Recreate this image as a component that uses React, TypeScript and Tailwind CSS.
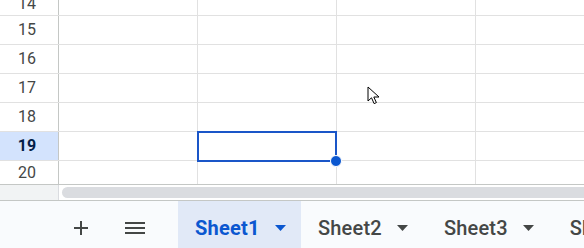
import React from 'react';

const ROWS = [14, 15, 16, 17, 18, 19, 20];
const SELECTED_ROW = 19;

const Caret = ({ className }: { className: string }) => (
  <svg width="11" height="6" viewBox="0 0 11 6" className={className}>
    <path d="M0 0h11L5.5 6z" fill="currentColor" />
  </svg>
);

const Row = ({ n }: { n: number }) => {
  const selected = n === SELECTED_ROW;
  const h = n === 14 ? 'h-[16px]' : n === 20 ? 'h-[23px]' : 'h-[29px]';
  return (
    <div className={`flex ${h} border-b border-[#e1e1e1] ${n === 20 ? 'border-b-0' : ''}`}>
      <div
        className={`w-[59px] shrink-0 border-r border-[#c4c7c5] flex justify-center pr-[4px] ${
          selected ? 'bg-[#d3e3fd] font-bold text-[#041e49]' : 'text-[#444746]'
        } ${n === 14 ? 'items-end pb-[3px]' : 'items-center'}`}
      >
        <span className="text-[16px] leading-none">{n}</span>
      </div>
      <div className="w-[139px] shrink-0 border-r border-[#e1e1e1]" />
      <div className="w-[139px] shrink-0 border-r border-[#e1e1e1]" />
      <div className="w-[139px] shrink-0 border-r border-[#e1e1e1]" />
      <div className="flex-1" />
    </div>
  );
};

const SheetTab = ({ name, active }: { name: string; active?: boolean }) => (
  <div
    className={`h-full flex items-center pt-[6px] shrink-0 ${
      active ? 'bg-[#e1e9f7] pl-[17px] w-[123px]' : 'pl-[17px] pr-[19px]'
    }`}
  >
    <span
      className={`text-[20px] leading-none tracking-[0.2px] ${
        active ? 'text-[#0b57d0] font-bold' : 'text-[#444746] font-medium'
      }`}
    >
      {name}
    </span>
    <Caret className={`ml-[15px] ${active ? 'text-[#0b57d0]' : 'text-[#444746]'}`} />
  </div>
);

export default function App() {
  return (
    <div
      className="relative w-[584px] h-[248px] overflow-hidden bg-white"
      style={{ fontFamily: 'Roboto, "Liberation Sans", Arial, sans-serif' }}
    >
      {/* grid */}
      <div className="h-[184px] flex flex-col">
        {ROWS.map((n) => (
          <Row key={n} n={n} />
        ))}
      </div>

      {/* horizontal scrollbar */}
      <div className="h-[17px] flex border-t border-b border-[#c4c7c5]">
        <div className="w-[59px] shrink-0 bg-[#f1f3f4] border-r border-[#dadce0]" />
        <div className="flex-1 pl-[3px] pt-[2px]">
          <div className="h-[11px] w-[560px] rounded-full bg-[#dadce0]" />
        </div>
      </div>

      {/* sheet tabs */}
      <div className="h-[47px] flex items-stretch bg-[#f9fbfd]">
        <div className="w-[178px] shrink-0 flex items-center pt-[6px]">
          <svg width="14" height="14" viewBox="0 0 14 14" className="ml-[74px] text-[#444746]">
            <path d="M7 0v14M0 7h14" stroke="currentColor" strokeWidth="2" />
          </svg>
          <svg width="20" height="14" viewBox="0 0 20 14" className="ml-[37px] text-[#444746]">
            <path d="M0 2h20M0 7h20M0 12h20" stroke="currentColor" strokeWidth="2" />
          </svg>
        </div>
        <SheetTab name="Sheet1" active />
        <SheetTab name="Sheet2" />
        <SheetTab name="Sheet3" />
        <SheetTab name="Sheet4" />
      </div>

      {/* selected cell */}
      <div className="absolute left-[197px] top-[131px] w-[140px] h-[31px] border-2 border-[#1a56c8]" />
      <div className="absolute left-[330px] top-[155px] w-[12px] h-[12px] rounded-full bg-[#0b57d0] border border-white" />

      {/* mouse pointer */}
      <svg
        width="14"
        height="20"
        viewBox="0 0 14 20"
        className="absolute left-[367px] top-[86px]"
      >
        <path
          d="M1 1v14l3.5-3.2 2.6 5.8 2.3-1-2.6-5.6H12z"
          fill="white"
          stroke="black"
          strokeWidth="1"
          strokeLinejoin="round"
        />
      </svg>
    </div>
  );
}
